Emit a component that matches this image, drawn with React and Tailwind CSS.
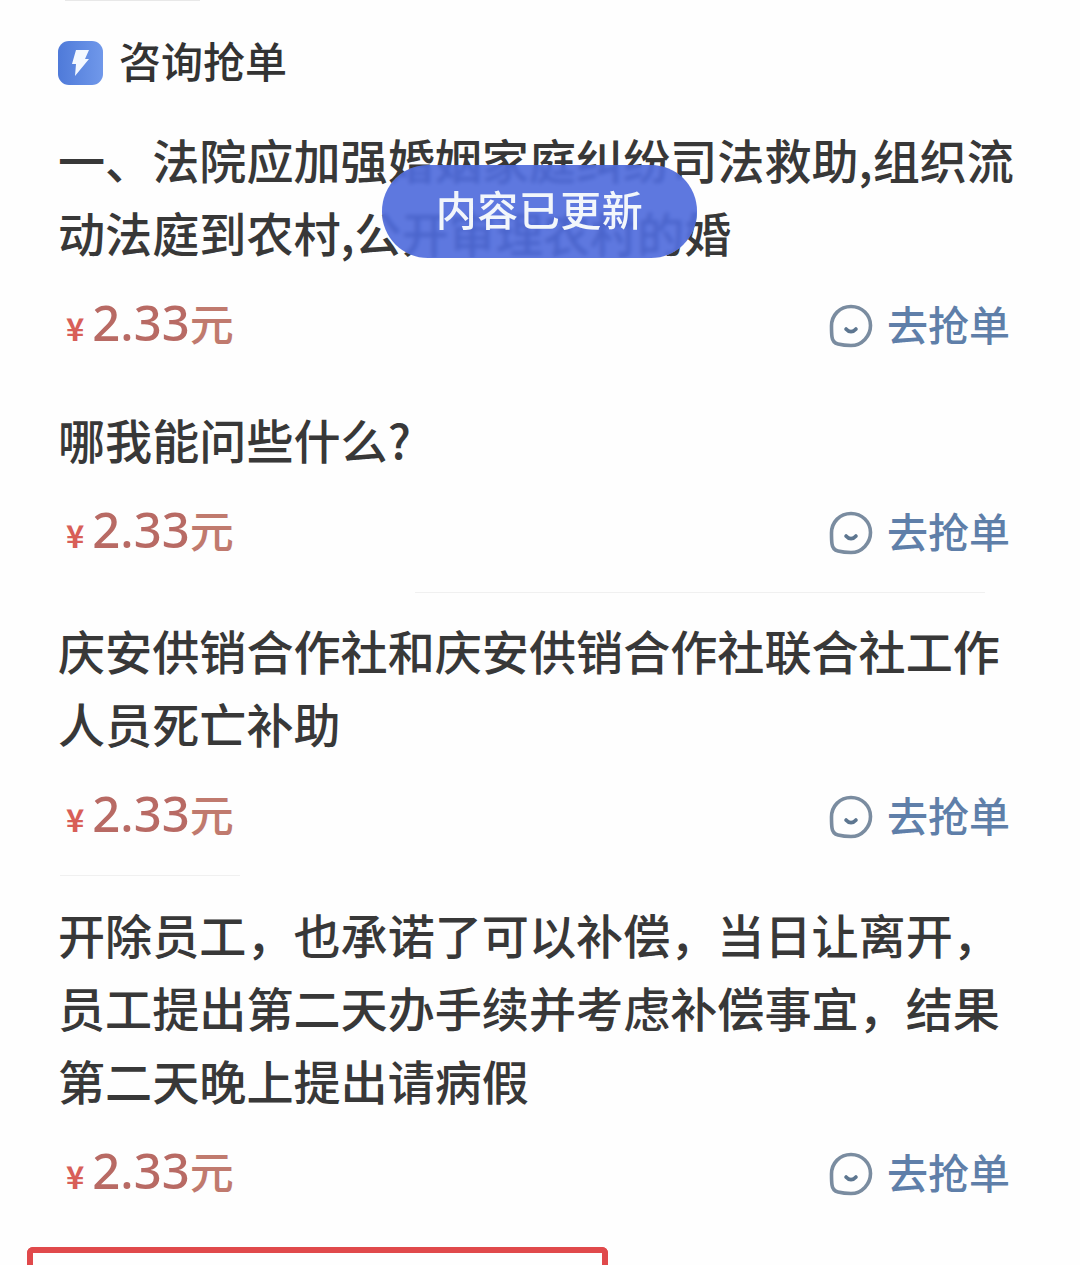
const cjk = "font-['Noto_Sans_CJK_SC','Noto_Sans',sans-serif]"

function Bolt() {
  return (
    <div className="flex h-[44px] w-[45px] items-center justify-center rounded-[11px] bg-gradient-to-r from-[#4f7ad9] to-[#7098ea]">
      <svg width="19" height="28" viewBox="0 0 19 28">
        <path d="M5 1h13l-4 9h4L4 27l1-12H1z" fill="#f4f8ff" />
      </svg>
    </div>
  )
}

function BubbleIcon() {
  return (
    <svg className="mt-[2px]" width="44" height="44" viewBox="0 0 44 44" fill="none" stroke="#7a8ca0" strokeWidth="3.6" strokeLinecap="round" strokeLinejoin="round">
      <path d="M22 2.500c11 0 19.500 8.500 19.500 19S33 41.500 22 41.500c-4 0-9-.5-13-1.500-4-1-5.500-3-6-7-.5-3.500-.5-7-.5-11C2.500 11 11 2.500 22 2.500z" />
      <path d="M17 25c3 3.500 7 3.500 10 0" stroke="#5d7690" />
    </svg>
  )
}

function PriceRow({ className }) {
  return (
    <div className={`flex h-[60px] items-center justify-between pr-[20px] ${className}`}>
      <div className="flex items-baseline pb-[5px] pl-[8px]">
        <span className="mr-[8px] text-[31px] font-bold leading-none text-[#d85f58]">¥</span>
        <span className="font-['Noto_Sans',sans-serif] text-[49px] font-medium leading-none text-[#b86a64]">2.33</span>
        <span className="text-[44px] font-medium leading-none text-[#c07a6e]">元</span>
      </div>
      <div className="flex items-center gap-[14px]">
        <BubbleIcon />
        <span className="pb-[3px] text-[41px] font-medium leading-none text-[#5f7fa9]">去抢单</span>
      </div>
    </div>
  )
}

function Question({ text, className }) {
  return (
    <div className={className}>
      <p className="whitespace-pre-line text-[47.100px] font-medium leading-[73px] text-[#383838]">{text}</p>
      <PriceRow className="mt-[27px]" />
    </div>
  )
}

export default function App() {
  return (
    <div className={`relative h-[1265px] w-[1080px] overflow-hidden bg-[#fefefe] blur-[0.5px] ${cjk}`}>
      <div className="mx-[65px] h-[1px] w-[135px] bg-[#e8e8e8]" />
      <div className="pl-[58px] pr-[50px]">
        <header className="mt-[40px] flex items-center gap-[16px]">
          <Bolt />
          <h1 className="pb-[7px] text-[42px] font-medium leading-[37px] text-[#333333]">咨询抢单</h1>
        </header>

        <Question className="mt-[37px]" text={'一、法院应加强婚姻家庭纠纷司法救助,组织流\n动法庭到农村,公开审理农村的婚'} />
        <Question className="mt-[47px]" text="哪我能问些什么?" />
        <div className="mt-[30px] h-[1px] w-[570px] translate-x-[357px] bg-[#f0f0f0]" />
        <Question className="mt-[20px]" text={'庆安供销合作社和庆安供销合作社联合社工作\n人员死亡补助'} />
        <div className="mt-[29px] h-[1px] w-[180px] translate-x-[2px] bg-[#f0f0f0]" />
        <Question className="mt-[21px]" text={'开除员工，也承诺了可以补偿，当日让离开，\n员工提出第二天办手续并考虑补偿事宜，结果\n第二天晚上提出请病假'} />
      </div>

      <div className="ml-[27px] mt-[44px] h-[40px] w-[581px] rounded-t-[6px] border-x-[6px] border-t-[6px] border-[#e0494b]" />

      <div className="absolute left-[382px] top-[165px] flex h-[93px] w-[315px] items-center justify-center rounded-[46px] bg-[#4c69dc]/90 backdrop-blur-[2px]">
        <span className="pb-[6px] text-[41px] font-medium leading-none tracking-[0.500px] text-[#f2f6fb]">内容已更新</span>
      </div>
    </div>
  )
}
